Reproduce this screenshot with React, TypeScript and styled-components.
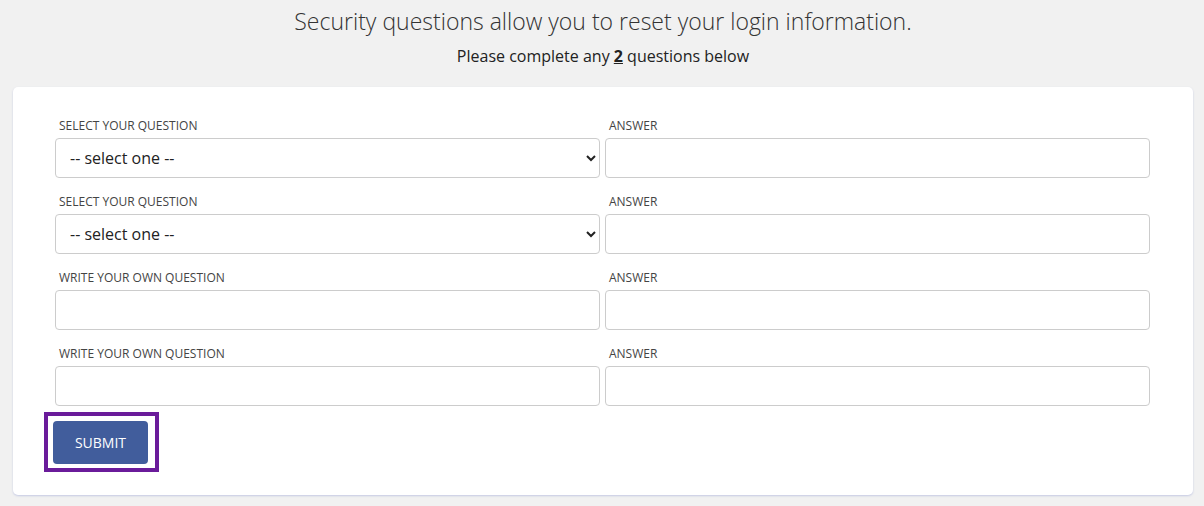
import styled, { createGlobalStyle } from "styled-components";

const GlobalStyle = createGlobalStyle`
  * { box-sizing: border-box; }
  body {
    margin: 0;
    background: #f1f1f1;
    font-family: "Open Sans", "Noto Sans", sans-serif;
    color: #333;
  }
`;

const rows = [
  { label: "SELECT YOUR QUESTION", kind: "select" },
  { label: "SELECT YOUR QUESTION", kind: "select" },
  { label: "WRITE YOUR OWN QUESTION", kind: "text" },
  { label: "WRITE YOUR OWN QUESTION", kind: "text" },
];

export default function App() {
  return (
    <>
      <GlobalStyle />
      <Page>
        <Title>Security questions allow you to reset your login information.</Title>
        <Subtitle>
          Please complete any <strong>2</strong> questions below
        </Subtitle>
        <Card>
          <Rows>
            {rows.map((row, i) => (
              <Row key={i}>
                <Field>
                  <Label>{row.label}</Label>
                  {row.kind === "select" ? (
                    <Select defaultValue="">
                      <option value="">-- select one --</option>
                      <option>What was the name of your first pet?</option>
                      <option>What city were you born in?</option>
                    </Select>
                  ) : (
                    <Input type="text" />
                  )}
                </Field>
                <Field>
                  <Label>ANSWER</Label>
                  <Input type="text" />
                </Field>
              </Row>
            ))}
          </Rows>
          <FocusFrame>
            <SubmitBtn>SUBMIT</SubmitBtn>
          </FocusFrame>
        </Card>
      </Page>
    </>
  );
}

const Page = styled.div`
  padding: 0 11px 10px 13px;
`;

const Title = styled.h1`
  margin: 0;
  padding-top: 5px;
  text-align: center;
  font-size: 23px;
  font-weight: 300;
  line-height: 32px;
  color: #333;
`;

const Subtitle = styled.p`
  margin: 8px 0 0;
  text-align: center;
  font-size: 16px;
  line-height: 22px;
  color: #222;

  strong {
    font-weight: 700;
    text-decoration: underline;
  }
`;

const Card = styled.div`
  margin-top: 20px;
  background: #fff;
  border-radius: 5px;
  box-shadow: 0 1px 2px rgba(70, 90, 190, 0.25);
  padding: 30px 43px 23px 42px;
`;

const Rows = styled.div`
  display: flex;
  flex-direction: column;
  gap: 15px;
`;

const Row = styled.div`
  display: grid;
  grid-template-columns: 1fr 1fr;
  column-gap: 5px;
`;

const Field = styled.div`
  display: flex;
  flex-direction: column;
`;

const Label = styled.label`
  font-size: 12px;
  line-height: 17px;
  padding-left: 4px;
  margin-bottom: 4px;
  color: #444;
`;

const Select = styled.select`
  height: 40px;
  border: 1px solid #ccc;
  border-radius: 4px;
  background: #fff;
  padding: 0 8px 0 10px;
  font-family: "Open Sans", "Noto Sans", sans-serif;
  font-size: 16px;
  color: #222;
`;

const Input = styled.input`
  height: 40px;
  border: 1px solid #ccc;
  border-radius: 4px;
  background: #fff;
  padding: 0 10px;
  font-family: "Open Sans", "Noto Sans", sans-serif;
  font-size: 16px;
`;

const FocusFrame = styled.div`
  display: inline-block;
  margin: 6px 0 0 -11px;
  padding: 5px 7px 4px 5px;
  border: 4px solid #6a1b9a;
`;

const SubmitBtn = styled.button`
  display: block;
  width: 95px;
  height: 43px;
  border: 0;
  border-radius: 4px;
  background: #415d9c;
  color: #fff;
  font-family: "Open Sans", "Noto Sans", sans-serif;
  font-size: 14px;
  cursor: pointer;
`;
